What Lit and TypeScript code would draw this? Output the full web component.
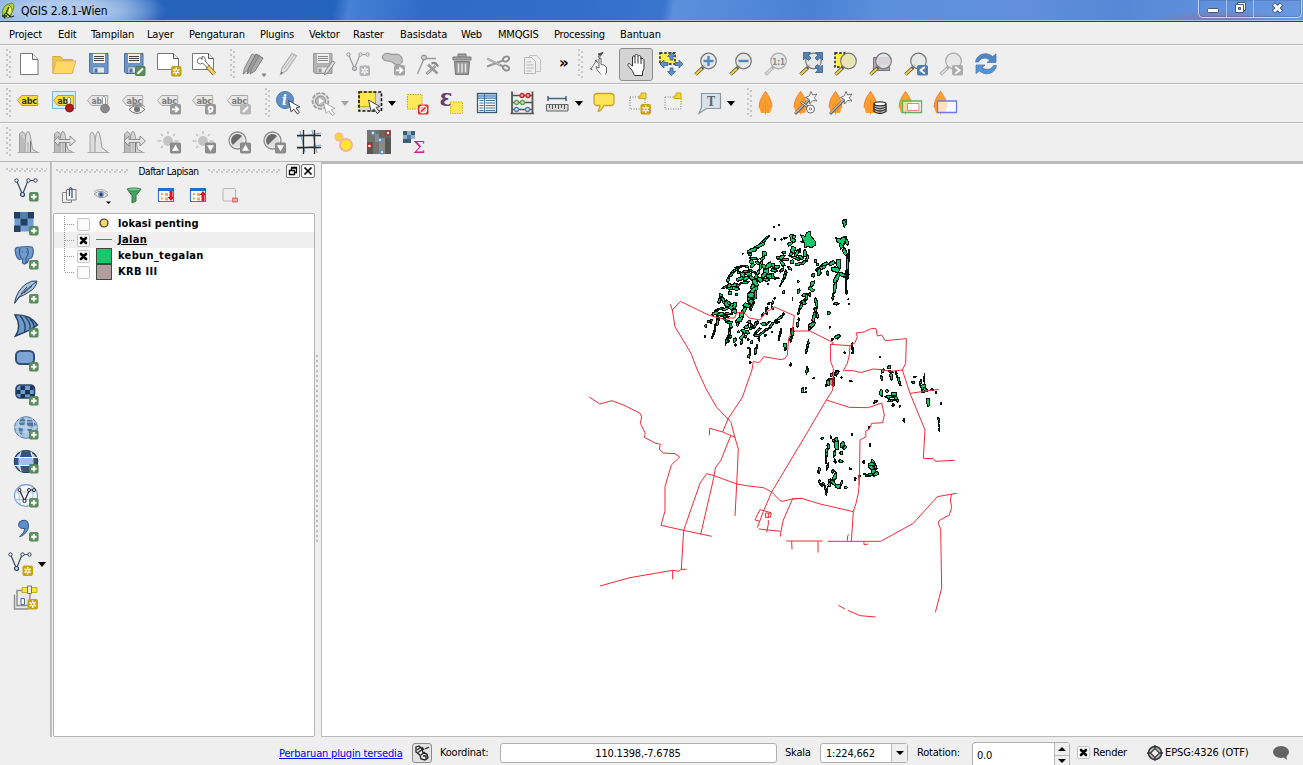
import { LitElement, html, svg, css } from "lit";
import { customElement } from "lit/decorators.js";

/* ---------- badges and shared glyph parts (24 x 24 grid) ---------- */
const plus = svg`<rect x="15.5" y="14.5" width="8.6" height="8.6" rx="1.2" fill="#5c8f5c" stroke="#4b7f4f" stroke-width=".8"/><path d="M19.8 16v5.6M17 18.8h5.6" stroke="#fff" stroke-width="1.9"/>`;
const star = (x: number, y: number, c = "#c9a20c") => svg`<g transform="translate(${x} ${y})"><rect x=".5" y=".5" width="9.5" height="9.5" rx="1.2" fill=${c} stroke=${c}/><path d="M5.200 1.500v7.500M2 3.400l6.400 3.700M8.400 3.400L2 7.100" stroke="#fff" stroke-width="1.500"/><circle cx="5.200" cy="5.200" r="1" fill=${c}/></g>`;
const badge = (c: string, d: string) => svg`<rect x="13.5" y="13.5" width="10" height="9.5" rx="1" fill=${c} stroke=${c}/><path d=${d} stroke="#fff" stroke-width="1.8" fill="none"/>`;
const up = svg`<rect x="13.5" y="13" width="10" height="10" rx="1" fill="#8f8f8f" stroke="#858585"/><path d="M18.500 14.800l3.500 6h-7z" fill="#fff"/>`;
const down = svg`<rect x="13.5" y="13" width="10" height="10" rx="1" fill="#8f8f8f" stroke="#858585"/><path d="M18.500 21.300l3.500-6h-7z" fill="#fff"/>`;
const page = svg`<path d="M.5 1.5h16l5 5v11H.5z" fill="#fff" stroke="#777"/><path d="M16.5 1.5v5h5" fill="#eee" stroke="#555"/>`;
const tag = (f: string, s: string, t: string, word = "abc") => svg`<path d="M.5 9.500l4.200-5h16v10h-16z" fill=${f} stroke=${s}/><text x="4.400" y="12.800" font-family="DejaVu Sans" font-weight="bold" font-size="9" textLength=${word.length * 5.2} lengthAdjust="spacingAndGlyphs" fill=${t}>${word}</text>`;
const greyTag = tag("#e6e6e6", "#a8a8a8", "#7c7c7c");
const lens = (o = 1) => svg`<g opacity=${o}><path d="M9 15.5l-7.5 7" stroke="#555" stroke-width="3.6"/><path d="M8 16.500l-6.500 6" stroke="#f5cd3a" stroke-width="2"/><path d="M8.8 14.8l2-2" stroke="#222" stroke-width="3"/><circle cx="14.5" cy="9" r="7.8" fill="#e4e7e6" fill-opacity=".88" stroke="#777" stroke-width="1.2"/></g>`;
const greyLens = svg`<path d="M9 15.5l-7.5 7" stroke="#aaa" stroke-width="3.4"/><path d="M8 16.5l-6 5.6" stroke="#ddd" stroke-width="1.8"/><path d="M8.8 14.8l2-2" stroke="#777" stroke-width="3"/><circle cx="14.5" cy="9" r="7.8" fill="#e8e8e8" stroke="#aaa" stroke-width="1.2"/>`;
const floppy = (a: string, b: string, c: string) => svg`<path d="M2.5 1.500h18.500v20h-17l-1.500-1.500z" fill=${a} stroke=${b}/><path d="M5.5 1.500h13v10h-13z" fill="#f0f0f0" stroke=${b} stroke-width=".6"/><path d="M7 4.500h10M7 6.500h10M7 8.500h10" stroke=${c} stroke-width="1"/><path d="M6 15h11.500v6H6z" fill="#e6e6e6" stroke=${b} stroke-width=".6"/><path d="M7.500 16.500h3v4h-3z" fill=${b}/>`;
const cursor = (x: number, y: number, s = "#444") => svg`<path transform="translate(${x} ${y})" d="M0 0l2.7 11.5 2.6-2.8 3.6 4.8 2.1-1.6-3.4-4.5 3.8-.9z" fill="#fff" stroke=${s} stroke-width="1"/>`;
const flame = svg`<path d="M7.5.5C5 4 1 9.500 1.200 16.500L3 22h9l1.800-5.500C14 9.500 10 4 7.500.5z" fill="#fba02f"/><path d="M7.500.5C5 4 1 9.500 1.200 16.500M7.500.5C10 4 14 9.500 13.800 16.500" fill="none" stroke="#f57b28"/><path d="M7.500 9v14.500M5 12.500v8M10 12.500v8" stroke="#ff8420" stroke-width=".8"/>`;
const wand = svg`<path d="M2 23L16 9" stroke="#666" stroke-width="2.800"/><path d="M2 22.500L15.500 9" stroke="#eee" stroke-width="1"/><path d="M18 .5l1.500 3.500 4.300-1-2.500 3.800 2.700 3.200-4.300-.6-3 3.600-.3-4.600-4-1.900 4-1.600z" fill="#fff" stroke="#666" stroke-width=".9"/>`;
const vline = (c: string) => svg`<path d="M2.500 2.500l6 14L14 2.500h7" fill="none" stroke=${c} stroke-width="1.200"/><circle cx="2.500" cy="2.500" r="1.700" fill="#e5edf5" stroke=${c}/><circle cx="8.500" cy="16.500" r="2" fill="#c5d8ee" stroke=${c} stroke-width="1.200"/><circle cx="14.500" cy="2.500" r="1.700" fill="#e5edf5" stroke=${c}/><circle cx="21.500" cy="2.500" r="1.700" fill="#e5edf5" stroke=${c}/>`;
const hist = (shape: number) => svg`<path d="M2.500 22.500V4L5 1.500l3 2 2 12 3 7z" fill="#cecece" stroke="#9c9c9c"/><path d="M8 22.500c0-8 0-21 3-21s3 15 5 18l5 3z" fill=${shape ? "#d4d4d4" : "#dedede"} stroke="#999"/><path d="M4 22V5M6 22V8M11 22V12" stroke="#a8a8a8"/><path d="M13.500 22.500V11" stroke="#777"/><path d="M.500 22.500h22" stroke="#aaa"/>`;
const harrow = svg`<path d="M2 11l5-5v3.500h11V6l5.500 5-5.500 5v-3.500H7V16z" fill="#e4e4e4" stroke="#8c8c8c"/>`;
const sun = svg`<circle cx="11" cy="11" r="5" fill="#c4c4c4"/><path d="M11 1v3M4 4l2 2M18 4l-2 2M0.500 11h4M4 18l2-2M17.500 11h4" stroke="#c0c0c0" stroke-width="1.500"/>`;
const contrast = svg`<circle cx="10.500" cy="10.500" r="8.500" fill="#eee" stroke="#8a8a8a" stroke-width="1.300"/><circle cx="10.500" cy="10.500" r="6.500" fill="#ddd"/><path d="M5.900 15.100A6.500 6.500 0 0 1 15.100 5.900z" fill="#6a6a6a"/>`;
const dark = "#33475f";
const checker = svg`<path d="M.500.500h19v19h-19z" fill="#6f9dd0"/><path d="M0 0h6.500v6.500H0zM13.500 0H20v6.500h-6.500zM6.500 6.500h7v7h-7zM0 13.500h6.500V20H0z" fill="#24405f"/><path d="M6.500 0h7v6.500h-7z" fill="#5580b5"/>`;

const I: Record<string, unknown> = {
  fresh: svg`<path d="M3.500 1.500h12l5.500 6v15h-17.500z" fill="#fff" stroke="#777"/><path d="M15.500 1.500v6h5.500" fill="#eee" stroke="#666"/>`,
  open: svg`<path d="M.800 21V4.500h8l2 3h10V21z" fill="#edc64e" stroke="#d8a93a"/><path d="M1 21.500L4 9h20l-4 12.500z" fill="#ffd964" stroke="#dcae40" stroke-width=".8"/>`,
  save: floppy("#6b96c8", "#4a6f9f", "#444"),
  saveas: svg`${floppy("#6b96c8", "#4a6f9f", "#444")}<rect x="13.500" y="14.500" width="9.500" height="9" rx="1" fill="#5c8f5c" stroke="#4b7f4f"/><path d="M15.500 21.800l5.500-5.300" stroke="#fff" stroke-width="2"/>`,
  print: svg`${page}${star(14, 14)}`,
  composer: svg`${page}<path d="M10 6.500a3 3 0 1 0 .5 4.500l5 5 2-2-4.500-5a3 3 0 0 0-3-4.500v3z" fill="#fff" stroke="#555" stroke-width=".9"/><path d="M15.500 14.500l7 7.500" stroke="#7a6020" stroke-width="4.400"/><path d="M16 15l6.500 7" stroke="#f1d068" stroke-width="3"/>`,
  pencils: svg`<path d="M2 22l1.500-6L11 2l4 2-8 14z" fill="#b5b5b5" stroke="#888"/><path d="M6 22l1.500-6L15 2l4 2-8 14z" fill="#9c9c9c" stroke="#777"/><path d="M9 22l1.500-5L18 4l4 2-8 13z" fill="#a9a9a9" stroke="#808080"/><path d="M2 22l2-1.500zM21 22h4l-2 2.500z" fill="#888" stroke="#888"/>`,
  pencil: svg`<path d="M4.500 22.500L6 16 16 1.500l4.500 2.300L10.500 18.500z" fill="#e2e2e2" stroke="#b0b0b0" stroke-width="1.200"/><path d="M8 17L18 3" stroke="#bbb"/><path d="M4.500 22.500l.7-3 2 1.500z" fill="#777"/>`,
  savee: svg`${floppy("#b4b4b4", "#969696", "#888")}<path d="M13.500 23l1-4.500L21.500 9l2.500 1.500-7 10z" fill="#ddd" stroke="#888"/>`,
  addf: svg`${vline("#999")}${star(13.500, 13.500, "#b4b4b4")}`,
  movef: svg`<path d="M1.500 6c-1-4 4-5.500 8-4 4 1 6-1 9 1s4 7 1 9-6 0-9-2-8 0-9-4z" fill="#c2c2c2" stroke="#888"/>${badge("#a6a6a6", "M15 18.300h5.500M18.300 15.500l3 2.800-3 2.800")}`,
  node: svg`<path d="M1.500 22L8 6.500H20" fill="none" stroke="#999" stroke-width="1.300"/><circle cx="8" cy="5.500" r="2.500" fill="#c8c8c8" stroke="#888"/><path d="M10.500 22l9-8" stroke="#8a8a8a" stroke-width="2.800"/><path d="M11 21.600l8.500-7.600" stroke="#ddd"/><path d="M12 12.500l9.500 9" stroke="#999" stroke-width="2.600"/><path d="M15.500 11.500q4-2 6.500 3" fill="none" stroke="#8a8a8a" stroke-width="2.200"/>`,
  trash: svg`<path d="M2 5h18v3H2zM7 5V2h8v3" fill="#a4a4a4" stroke="#777"/><path d="M3.500 9.500h15l-1 13h-13z" fill="#9a9a9a" stroke="#777"/><path d="M7.500 11.500v9M11 11.500v9M14.500 11.500v9" stroke="#e8e8e8" stroke-width="1.500"/>`,
  cut: svg`<path d="M1 6.500l16 8M1 14.500L17 8.500" stroke="#999" stroke-width="2.200"/><path d="M1 6.500l13 6.200" stroke="#ddd" stroke-width=".7"/><ellipse cx="20" cy="7" rx="3.200" ry="2.300" transform="rotate(-25 20 7)" fill="none" stroke="#8c8c8c" stroke-width="1.800"/><ellipse cx="20" cy="16" rx="3.200" ry="2.300" transform="rotate(25 20 16)" fill="none" stroke="#8c8c8c" stroke-width="1.800"/>`,
  copy: svg`<path d="M8.500 3.500h7l4 4v12h-11z" fill="#eee" stroke="#c4c4c4"/><path d="M3.500 5.500h7l4 4v12h-11z" fill="#eee" stroke="#b6b6b6"/><path d="M5.500 10h5M5.500 13h7M5.500 16h7M5.500 19h5" stroke="#b8b8b8"/>`,
  touch: svg`<path d="M8 7.500L2 17" stroke="#777"/><path d="M1 16.500l2.500 1.500M9 2l5-1.500-3 4z" stroke="#555" fill="#555"/><path d="M12 22.500L8 17.500l-1-3 3 1.500V6.500q1-1.300 2 0v6l3 .5 2.500 2v5l-1 2.500" fill="#fff" stroke="#666"/><path d="M6 8l3 2.500M9 4l2 3" stroke="#555" stroke-width="1"/>`,
  hand: svg`<path d="M8.500 22.500L6.500 18 2 12.500c-.8-2 1-2.500 2.300-1.300L6.500 13V4c.5-1.800 2.200-1.500 2.500 0v-1.500c.5-1.500 2.500-1.500 3 0V3.500c.5-1.500 2.500-1.200 3 .5V6c1.500-1.300 3-.3 3 1.500v8L16.500 19v3.500z" fill="#fff" stroke="#333" transform="translate(2)"/><path d="M11 4v6.500M14 3.500v7M17 4.500v6.500" stroke="#333"/>`,
  pansel: svg`<path d="M1 1h15v11H1z" fill="#ffec4d" stroke="#111" stroke-width="1.400" stroke-dasharray="2.500 1.700"/><g fill="#5f90c5" stroke="#38638f" stroke-width=".8"><path d="M12.500.5l4 4h-2.500V8h-3V4.500H8.500z"/><path d="M12.500 23.500l4-4h-2.500V16h-3v3.500H8.500z"/><path d="M1 12l4-4v2.500h4v3H5V16z"/><path d="M24 12l-4-4v2.500h-4v3h4V16z"/></g>`,
  zin: svg`${lens()}<path d="M14.500 4v10M9.500 9h10" stroke="#5585bb" stroke-width="2.400"/>`,
  zout: svg`${lens()}<path d="M9.500 9h10" stroke="#5585bb" stroke-width="2.400"/>`,
  z11: svg`${greyLens}<text x="8.300" y="12.500" font-size="9.500" font-weight="bold" textLength="12.500" lengthAdjust="spacingAndGlyphs" fill="#888" font-family="DejaVu Sans">1:1</text>`,
  zfull: svg`${lens()}<g fill="#5583b5" stroke="#355d88" stroke-width=".8"><path d="M4.500.5h7L9 3l3 3-2.500 2.500-3-3-2 2.500z"/><path d="M23.500.5h-7L19 3l-3 3 2.500 2.500 2.500-3 2.500 2.500z"/><path d="M23.500 20.500h-7L19 18l-3-3 2.500-2.500 2.500 3 2.500-2.500z"/></g>`,
  zsel: svg`<path d="M1 1h10v14H1z" fill="#ffec4d" stroke="#111" stroke-width="1.400" stroke-dasharray="2.500 1.700"/>${lens()}<circle cx="14.500" cy="9" r="6.800" fill="#e9e4b4"/>`,
  zlay: svg`<path d="M4.500 5.500h16v13h-16z" fill="#b8a8bb" stroke="#7e7080"/>${lens()}<path d="M9 5.500h11v7H9z" fill="#cdc4d0" opacity=".5"/>`,
  zlast: svg`${lens()}${badge("#4f7fae", "M20.800 15l-4.300 3.300 4.300 3.300")}`,
  znext: svg`${greyLens}${badge("#acacac", "M16.300 15l4.300 3.300-4.300 3.300")}`,
  refresh: svg`<path d="M1.500 10c1-8 11-11 17-5.500L22 2v8.500h-9L16 8C11 4.500 6 6.500 4.500 10z" fill="#4f87c4" stroke="#4276b0" stroke-width=".7"/><path d="M22.500 13.500c-1 8-11 11-17 5.500L2 21.500V13h9l-3 2.700c5 3.300 10 1.300 11.500-2.200z" fill="#5a92cf" stroke="#4276b0" stroke-width=".7"/>`,

  lab: tag("#f8db3a", "#c79b1e", "#333"),
  labpin: svg`<rect x=".5" y=".5" width="23" height="17" fill="#dcebf9" stroke="#88b4e4"/><g transform="translate(1)">${tag("#f8db3a", "#c79b1e", "#333", "ab")}</g><path d="M15.500 13V7.500q1.500-3 3 0V13" fill="#fff" stroke="#888"/><circle cx="17.500" cy="17" r="4" fill="#b01c1c" stroke="#8c1212"/>`,
  labg: svg`${tag("#e6e6e6", "#a8a8a8", "#7c7c7c", "ab")}<path d="M15.500 13V6.500q1.500-3 3 0V13" fill="#fff" stroke="#999"/><circle cx="18" cy="17.500" r="4.300" fill="#8a8a8a" stroke="#777"/>`,
  labeye: svg`${greyTag}<path d="M7 18.500q8-8 16 0q-8 8-16 0z" fill="#f2f2f2" stroke="#777"/><circle cx="15" cy="18.300" r="3" fill="#777"/><path d="M7 15.500q8-5 16 0" fill="none" stroke="#888"/>`,
  labmov: svg`${greyTag}${badge("#989898", "M15 18.300h5.500M18.300 15.500l3 2.800-3 2.800")}`,
  labrot: svg`${greyTag}${badge("#989898", "M16.500 21.500q4.500-.5 4-4a2 2 0 1 0-1 2")}`,
  labed: svg`${greyTag}${badge("#b8b8b8", "M16 21l5-5")}`,
  info: svg`<circle cx="9" cy="9" r="8.500" fill="#5f8fc6" stroke="#4c7ab0"/><text x="6" y="14" font-family="DejaVu Serif" font-style="italic" font-weight="bold" font-size="14" fill="#fff">i</text>${cursor(12.500, 9.500)}`,
  gear: svg`<circle cx="9.500" cy="10" r="8" fill="#ddd" stroke="#999" stroke-width="1.600" stroke-dasharray="4 1.500"/><circle cx="9.500" cy="10" r="5" fill="#bbb" stroke="#888"/><path d="M8 7l5 3-5 3z" fill="#fff"/>${cursor(12.500, 11, "#aaa")}`,
  select: svg`<path d="M1 1h22.500v19H1z" fill="#d5d7da"/><path d="M1 1h16.500v14.500H1z" fill="#ffe74a" stroke="#c8a923"/><path d="M1 1h22.500v19H1z" fill="none" stroke="#111" stroke-width="1.600" stroke-dasharray="3 1.800"/>${cursor(10.500, 9)}`,
  desel: svg`<path d="M2.500 3.500h14.500v14.500H2.500z" fill="#ffe95a" stroke="#c9a613" stroke-dasharray="1.500 1"/><rect x="13" y="13.500" width="10.500" height="10" rx="1.500" fill="#df2d2d"/><circle cx="18.200" cy="18.500" r="3.400" fill="#f6b8b8" stroke="#fff" stroke-width="1.200"/><path d="M16 20.800l4.500-4.500" stroke="#df2d2d" stroke-width="1.300"/>`,
  eps: svg`<text x="-.5" y="14.500" font-size="24" font-weight="bold" font-family="DejaVu Serif" fill="#6a3a6c" textLength="13" lengthAdjust="spacingAndGlyphs">ε</text><path d="M10.500 11h12v11.500h-12z" fill="#ffe95a" stroke="#d0b020" stroke-dasharray="1.500 1"/>`,
  table: svg`<rect x="2.500" y="2.500" width="19" height="19" fill="#f4f6f7" stroke="#355a75" stroke-width="1.300"/><path d="M3 3.500h18v3H3z" fill="#7ba6cf"/><path d="M4.500 9.500h4M4.500 12h4M4.500 14.500h4M4.500 17h4M4.500 19.500h4M10.500 9.500h9.500M10.500 12h9.500M10.500 14.500h9.500M10.500 17h9.500M10.500 19.500h9.500" stroke="#53748c"/><path d="M3 7.300h18M9.500 3v18" stroke="#355a75" stroke-width=".8"/>`,
  abacus: svg`<path d="M2 .5V22M22.500 .5V22" stroke="#555" stroke-width="1.800"/><path d="M.500 22.500h23.500M2 4.500h20M2 11.500h20M2 18.500h20" stroke="#555" stroke-width="1.300"/><g stroke-width="1.300"><g fill="#f3a8a8" stroke="#c22"><circle cx="12" cy="4.500" r="2"/><circle cx="18" cy="4.500" r="2"/></g><g fill="#cfe9cf" stroke="#5aa35a"><circle cx="6.500" cy="11.500" r="2"/><circle cx="12.500" cy="11.500" r="2"/></g><g fill="#dbe8f7" stroke="#4f7fb0"><circle cx="6.500" cy="18.500" r="2"/><circle cx="17.500" cy="18.500" r="2"/></g></g>`,
  ruler: svg`<path d="M3 7.500h18M3 5v5M21 5v5" stroke="#416585" stroke-width="1.500"/><path d="M1.500 13.500h21.500v6.500H1.500z" fill="#d9d9d9" stroke="#666"/><path d="M4.500 14v3M7.500 14v4M10.500 14v3M13.500 14v4M16.500 14v3M19.500 14v4" stroke="#555"/>`,
  tip: svg`<path d="M5 2.500h14q3 0 3 3v5.500q0 3.500-3 3.500h-7l-3 4.500q-2 1.800-3 1 1.500-1.500 2-5.500H5q-3 0-3-3.500V5.500q0-3 3-3z" fill="#fde55a" stroke="#c9a227" stroke-width="1.300"/>`,
  annot: svg`<path d="M3 6h15v12H3z" fill="none" stroke="#777" stroke-dasharray="1 1.500"/><path d="M14 2h5v5.500h-7V5h2z" fill="#f5d930" stroke="#caa51a"/>${star(13.500, 13)}`,
  form: svg`<path d="M3 6h16v12H3z" fill="none" stroke="#777" stroke-dasharray="1 1.500"/><path d="M14 2h5v5.500h-7V5h2z" fill="#f5d930" stroke="#caa51a"/>`,
  textann: svg`<path d="M4.500 2.500h19v15h-14L2 22.500l2.500-6z" fill="#d7e2ec" stroke="#8d979f" stroke-width="1.200"/><text x="10" y="14.500" font-family="DejaVu Serif" font-size="12" font-weight="bold" textLength="8" lengthAdjust="spacingAndGlyphs" fill="#666">T</text>`,
  flame,
  flamecut: svg`${flame}${wand}<path d="M8 11l10 7" stroke="#666" stroke-width="2.600"/><path d="M8 11l10 7" stroke="#eee" stroke-width="1"/><circle cx="17.500" cy="18" r="4" fill="#fff" stroke="#666"/><circle cx="17.500" cy="18" r="1.200" fill="none" stroke="#777"/>`,
  flamewand: svg`${flame}${wand}`,
  flamedb: svg`${flame}<g fill="#fff" stroke="#333" stroke-width="1.300"><path d="M11 17.500v3q6 4 12 0v-3" fill="#bbb"/><path d="M11 15v3q6 4 12 0v-3" fill="#ddd"/><path d="M11 12.800v3q6 4 12 0v-3" fill="#bbb"/><ellipse cx="17" cy="12.800" rx="6" ry="2"/></g>`,
  flamegreen: svg`${flame}<path d="M4.500 10h19v11.500h-19z" fill="#fff" fill-opacity=".6" stroke="#58b558" stroke-width="1.300"/><path d="M9.500 12.500h11.500v7H9.500z" fill="#fff" fill-opacity=".8" stroke="#ef8080"/>`,
  flameblue: svg`${flame}<path d="M4.500 10h19v11.500h-19z" fill="#fff" fill-opacity=".7" stroke="#6f79ee" stroke-width="1.300"/>`,

  h1: hist(0),
  h2: svg`${hist(1)}${harrow}`,
  h3: svg`<path d="M3 22.500V5q2-6 4 0l3 13 3 4.500z" fill="#dcdcdc" stroke="#a6a6a6"/><path d="M8 22.500q-.5-20 3-21 2 1 4 16l6 5z" fill="#e4e4e4" stroke="#999"/><path d="M.500 22.500h22" stroke="#aaa"/>`,
  h4: svg`${hist(1)}${harrow}`,
  sunup: svg`${sun}${up}`,
  sundown: svg`${sun}${down}`,
  conup: svg`${contrast}${up}`,
  condown: svg`${contrast}${down}`,
  georef: svg`<path d="M3 1l5 21M15 0l5 23M0 7l24-4M0 19l24-4" stroke="#7aa6cb" stroke-width="1.100"/><path d="M6.500 0v24M17.500 0v24M0 5.500h24M0 17.500h24" stroke="#2b2b2b" stroke-width="1.300"/>`,
  heat: svg`<circle cx="7" cy="7" r="4.500" fill="#f9b4a0"/><circle cx="7" cy="7" r="3" fill="#fcd829"/><circle cx="14" cy="15" r="7" fill="#f7b09c"/><circle cx="14" cy="15" r="5" fill="#ffe92a"/>`,
  interp: svg`<path d="M0 0h24v24H0z" fill="#8b8b88"/><path d="M0 0h12v4H8v8h4v12H0z" fill="#73736f"/><path d="M0 12h6v12H0zM18 8h6v16h-6z" fill="#575754"/><path d="M12 0h12v8H12z" fill="#666662"/><g stroke-width="1.200"><g fill="#cfe0f0" stroke="#5b8dc0"><circle cx="6" cy="3" r="1.900"/><circle cx="13" cy="10" r="1.900"/><circle cx="15" cy="22" r="1.900"/></g><g fill="#fff" stroke="#c32222"><circle cx="21" cy="3" r="1.900"/><circle cx="2.500" cy="16" r="1.900"/></g></g>`,
  zonal: svg`<path d="M1 1h12v8H9v4H1z" fill="#3f5c75"/><path d="M5 1h4v4H5zM1 5h4v4H1zM9 5h4v4H9z" fill="#8fb0cc"/><path d="M5 5h4v4H5z" fill="#56799a"/><text x="11" y="22.500" font-family="DejaVu Serif" font-size="17" fill="#cc2299" textLength="12" lengthAdjust="spacingAndGlyphs">Σ</text>`,

  vector: svg`${vline(dark)}${plus}`,
  raster: svg`${checker}${plus}`,
  postgis: svg`<path d="M1.500 6Q0 1 6 1q8-1 12 0 3 4-.5 11l-2.500.5-1.500 4-3 1.500-2-1V12.500l-3 1Q2 12 1.500 6z" fill="#6f9bcd" stroke="#3e6490" stroke-width="1.200"/><path d="M6 2q-2 6 1 10M13 2q3 5-1 10v5M8 6h1M12 6h1" fill="none" stroke="#2d4c75"/>${plus}`,
  spatialite: svg`<path d="M.500 23Q3 10 12 4q6-4 11-3-1 7-8 11-6 4-10 5z" fill="#a9c6e3" stroke="#33475f"/><path d="M.500 23.500Q8 12 22 2M7 14l6-7M10 13l8-7" fill="none" stroke="#33475f"/>${plus}`,
  mssql: svg`<path d="M1 1q15-1 22.500 10-6 5-22 11Q8 12 1 1z" fill="#6d9acb" stroke="#24405f" stroke-width="1.400"/><path d="M6 1.500q7 8 4.500 17M11 2.500q6 6 5 13M16 5q4 4 4 8" fill="none" stroke="#24405f" stroke-width="1.300"/>${plus}`,
  oracle: svg`<rect x="2" y="3" width="18" height="13" rx="4.500" fill="#7da5d6" stroke="#33507a" stroke-width="2"/>${plus}`,
  oraster: svg`<rect x="2" y="3" width="18.500" height="13" rx="4" fill="#6f9dd0" stroke="#2a4568" stroke-width="1.600"/><path d="M6.500 4H11v4H6.500zM16 4h3.500v4H16zM2.500 8h4v4h-4zM11 8h5v4.500h-5zM6.500 12H11v4H6.500zM16 12h4v4h-4z" fill="#1f3450"/>${plus}`,
  wms: svg`<ellipse cx="12" cy="11.500" rx="11.500" ry="10.800" fill="#a6c3e4" stroke="#5579a5"/><path d="M4 5l5-3 3 3-2 4H6zM13 4l6 0 3 5-4 3-5-3zM4 11l5 2-1 6-4-3zM13 13l5 0-2 5z" fill="#52779f"/><path d="M0 11h24M12 1v21M6 2q-4 9 0 19M18 2q4 9 0 19M2 6h20M2 16h20" fill="none" stroke="#cbdcf0" stroke-width=".8"/>${plus}`,
  wcs: svg`<ellipse cx="12" cy="11.500" rx="11.500" ry="10.800" fill="#9fc1ea" stroke="#24405f" stroke-width="1.400"/><path d="M7 2h9l2 5H5zM.500 7.500H6V15H1zM18 7.500h5V15h-5zM6 15h11v6l-5 1-5-2z" fill="#33537c"/><path d="M.500 7.500h23M.500 15.500h23M7 1.500q-4 10 0 20M17 1.500q4 10 0 20" fill="none" stroke="#fff"/>${plus}`,
  wfs: svg`<ellipse cx="12" cy="11.500" rx="11.500" ry="10.800" fill="#f4f8fd" stroke="#6f9bd0" stroke-width="1.200"/><path d="M1 8h22M1 15.500h22M7 1.500q-4 10 0 20M17 1.500q4 10 0 20" fill="none" stroke="#a7c3e4"/><path d="M5.500 6l5 11 5-11H20" fill="none" stroke="#222" stroke-width="1.200"/><g fill="#fff" stroke="#222"><circle cx="5.500" cy="6" r="1.500"/><circle cx="10.500" cy="17" r="1.600"/><circle cx="15" cy="6" r="1.500"/><circle cx="20" cy="6" r="1.500"/></g>${plus}`,
  csv: svg`<path d="M8 2.500q6.500-1.500 6.500 5.500 0 7-9 11 5-4 5.500-8.500-6.500.5-6.500-4 .5-3.500 3.500-4z" fill="#5d8fcb" stroke="#32557f"/>${plus}`,
  newvec: svg`${vline(dark)}${star(14.500, 13.500)}`,
  gps: svg`<path d="M.500 8.500v14.500h14M3 4.500h13v15H3z" fill="#e8e8e8" stroke="#8f8f8f" stroke-width="1.400"/><path d="M8 1.500h15v5H8z" fill="#f5e63a" stroke="#c0ac2c"/><path d="M13.500 0h4v7.500h-4z" fill="#e9e9e9" stroke="#777"/><path d="M7 12.500h3.500v6H7z" fill="#fff" stroke="#4c6d8c"/>${star(13.500, 13)}`,

  dup: svg`<path d="M4.500 9.500h9v10h-9z" fill="#eee" stroke="#888"/><path d="M8.500 6.500h9.500v10.500H8.500z" fill="#f4f4f4" stroke="#777"/><path d="M11.500 13V6q1.200-3 2.500 0v9" fill="none" stroke="#33537c" stroke-width="1.200"/>`,
  eye: svg`<path d="M4 11q7-6 14 1-7 6-14-1z" fill="#e4e8ee" stroke="#999"/><circle cx="11" cy="11.500" r="2.800" fill="#6b8fc0"/><circle cx="11" cy="11.500" r="1.200" fill="#223"/><path d="M4 8.500q7-4.500 14 1" fill="none" stroke="#aaa"/><path d="M16 18.500h5L18.500 21z" fill="#000"/>`,
  filter: svg`<path d="M5 6h14l-5 6.500V18l-4 2v-7.500z" fill="#48a063" stroke="#2e7d46"/><ellipse cx="12" cy="6.500" rx="6.500" ry="1.600" fill="#79c490" stroke="#2e7d46" stroke-width=".8"/>`,
  expand: svg`<path d="M4.500 5.500h15v13h-15z" fill="#fff" stroke="#3978d6" stroke-width="1.200"/><path d="M4 5h16v3H4z" fill="#2a67cf"/><path d="M7 10h2v2H7zM7 14.500h2v2H7zM11 10h3v3h-3zM11 14.500h3v3h-3z" fill="#f3a94c"/><path d="M15.500 8v6H13.500l3.500 4 3-4H18.500V8z" fill="#e2101b"/>`,
  collapse: svg`<path d="M4.500 5.500h15v13h-15z" fill="#fff" stroke="#3978d6" stroke-width="1.200"/><path d="M4 5h16v3H4z" fill="#2a67cf"/><path d="M7 10h2v2H7zM7 14.500h2v2H7zM11 10h3v3h-3zM11 14.500h3v3h-3z" fill="#f3a94c"/><path d="M15.500 18v-6H13.500l3.500-4 3 4H18.500v6z" fill="#e2101b"/>`,
  remove: svg`<rect x="5" y="5.500" width="12.500" height="12.500" rx="1" fill="#eee" stroke="#b5b5b5"/><rect x="14" y="14.500" width="6" height="5" rx="1" fill="#e86d6d"/><path d="M15 17h4" stroke="#fff"/>`,
};
const icon = (n: string) => html`<svg class="ic" width="24" height="24" viewBox="0 0 24 24">${I[n]}</svg>`;

/* ---------- map data ---------- */
type Frame = { dx: number; dy: number; lines: string[] };
const roads: Frame[] = [
  { dx: 580, dy: 290, lines: [
    "271,43 277,60 285,110 333,190 352,240 380,300 410,352 444,387 453,397 464,440 475,477 470,585 465,678",
    "277,60 301,34 388,76 437,89 450,84 464,84 470,68 492,68 508,84 540,90 557,67 583,51 643,77 637,122 626,145 622,195 615,205 604,209 551,200 541,215 533,218 520,214 516,240 487,322 444,387 428,426",
    "388,436 389,415 428,426 466,442", "452,438 422,512 406,534 402,560 362,733",
    "28,321 59,342 96,332 135,347 180,370 185,380 181,400 196,430 193,442 225,459 241,463 238,478 250,489 285,491 299,501 274,525 255,590 255,663 243,706 311,721 395,739",
    "311,721 360,580 380,551 402,557 470,582 505,588 550,593 575,606 600,632 608,634 640,626 666,625",
    "311,721 304,838", "60,888 150,863 278,841 297,844 302,838 320,838", "278,841 278,868",
    "660,464 575,606 550,665 532,713", "573,668 540,659 527,685 525,690 540,694", "557,669 574,670 571,682 556,682 557,669", "565,670 565,682", "565,690 565,702 560,727", "536,717 603,724 601,740", "638,626 610,690 603,724" ] },
  { dx: 740, dy: 480, lines: [
    "158,57 185,55 240,72 340,95 334,184", "340,95 348,70 355,40 358,10 355,-14", "139,183 248,183", "155,183 156,208", "234,184 234,218",
    "263,184 422,184 520,130 592,50 650,40", "635,42 631,60 635,82 628,105 597,122 595,130 602,148 605,325 586,397",
    "322,182 323,168 327,163", "372,185 372,194 385,192", "295,376 315,387", "323,391 360,407 407,411" ] },
  { dx: 790, dy: 330, lines: [
    "7,3 60,3 130,38 128,42 121,43 122,95 130,115 128,180 109,210 28,348",
    "122,43 180,47 178,75 172,100 160,122 190,122 205,126 215,127 250,117 275,119 300,124 337,120 347,100 349,26 286,32 275,15 262,18 258,-4 245,-5 222,6 198,9 202,20 195,38 180,47",
    "337,120 360,190 405,300 400,385 430,386 436,394 494,391", "360,190 446,178",
    "109,210 178,232 235,233 275,219 283,255 278,278 245,280 238,298 227,303 228,320 210,330 208,455 205,464" ] },
];

/* plots: x, y, width, height, rotation in a third-pixel grid */
type Plot = [number, number, number, number, number];
const north: Plot[] = [
  [448,25,11,22,15],[452,15,6,8,0],[238,37,4,4,0],[252,30,3,4,0],[440,88,12,30,-5],[455,80,8,24,0],[450,110,14,20,0],[462,120,6,30,0],
  [432,145,18,24,-20],[412,145,16,16,0],[422,165,20,22,10],[442,180,22,14,0],[458,160,8,60,0],[453,205,6,60,0],[424,190,14,34,10],[420,215,7,50,5],[414,245,5,24,10],[424,266,14,8,-20],[463,266,4,4,0],[461,253,3,4,0],
  [390,148,20,12,-10],[378,160,26,14,-25],[372,172,12,22,30],[362,137,9,12,20],[368,148,8,8,0],[355,182,10,12,0],[352,205,9,22,5],[349,222,16,14,20],[335,245,9,22,25],[325,262,22,12,-30],[318,275,10,22,15],[312,290,5,20,5],[343,238,8,12,0],
  [364,265,8,34,0],[361,290,12,20,5],[356,306,12,26,10],[349,330,16,24,25],[344,340,7,14,0],[367,300,5,22,0],[308,328,10,14,20],[312,313,5,10,0],[403,296,9,11,-10],[404,338,4,5,0],[398,175,4,20,0],[455,230,4,16,0],
  [292,72,20,22,0],[298,65,12,12,0],[285,86,13,14,20],[269,70,12,5,-10],[259,73,5,4,0],[241,73,5,5,0],[295,105,20,18,10],[306,115,12,20,15],[288,118,10,14,0],[303,130,24,10,20],[318,128,14,12,0],[329,116,14,18,15],[336,130,10,16,10],[325,143,16,9,-20],[309,147,16,11,-10],[290,140,10,12,0],[315,105,6,12,0],
  [268,113,12,8,0],[262,126,20,10,-15],[248,130,12,9,0],[272,134,16,9,0],[262,146,18,12,30],[283,160,15,8,20],[272,174,10,14,0],[260,165,8,14,30],[245,155,14,16,10],[237,166,16,12,0],[232,182,16,14,20],[234,150,14,10,0],
  [216,68,22,6,-30],[205,80,26,9,-35],[190,95,40,13,-30],[173,106,28,14,-35],[165,117,10,12,0],[207,117,20,12,-20],[202,130,14,11,0],[175,130,22,8,10],[168,140,12,12,0],[188,143,13,10,0],[198,150,10,20,10],[173,152,17,11,0],[143,117,3,3,0],
  [137,155,28,5,-10],[122,165,28,7,-35],[108,180,28,6,-50],[99,196,18,7,-60],[88,217,16,6,-20],[130,172,10,8,0],[155,155,10,6,0],
  [208,155,18,12,20],[215,170,24,16,-10],[208,180,18,14,0],[222,152,16,22,0],[222,185,14,16,0],[212,195,22,10,-10],[195,195,22,13,-20],[183,185,15,10,0],[189,172,10,14,0],[170,168,20,8,30],[160,176,16,14,0],[150,170,20,7,-20],[143,180,20,14,10],[155,190,22,11,0],[136,192,20,14,0],[150,203,24,8,-10],[170,190,14,16,0],[180,205,22,20,0],[172,215,16,12,0],
  [176,225,22,22,0],[170,240,22,24,10],[168,258,18,22,20],[155,270,22,14,-20],[148,286,16,18,30],[140,300,20,15,-35],[133,315,14,24,25],[128,328,6,20,20],[161,250,10,12,0],[180,240,10,26,10],[170,275,8,20,20],
  [112,215,32,16,-10],[121,220,18,14,20],[102,211,12,12,0],[106,232,12,11,0],[130,211,10,10,0],[125,240,6,9,0],[77,242,12,9,20],[73,258,6,28,15],[85,257,18,12,40],[95,268,26,12,30],[108,275,22,14,0],[90,282,20,8,0],[70,283,24,6,-20],[100,262,6,24,-30],[120,270,14,18,40],[78,297,34,7,0],[100,297,30,6,10],[62,295,18,12,0],[118,290,12,16,0],[90,305,22,5,0],
  [68,320,10,22,10],[60,338,6,20,5],[55,358,5,24,15],[67,308,10,10,0],[40,320,9,7,-20],[33,332,9,8,0],[50,316,7,8,0],[30,365,4,5,0],[48,325,4,4,0],
  [102,322,18,12,10],[107,335,9,18,20],[104,350,8,18,10],[107,364,6,12,0],[95,375,6,26,10],[119,375,7,18,0],[121,390,5,6,0],[92,315,20,5,20],[101,378,5,10,0],
  [164,322,12,10,0],[155,336,12,16,20],[166,340,12,8,-20],[147,350,16,14,0],[157,352,14,10,0],[141,365,14,18,30],[139,382,8,14,0],[150,365,8,10,0],[130,350,5,6,0],[182,328,8,22,30],[188,322,12,5,-60],[170,333,6,12,0],
  [191,345,16,9,-30],[186,362,14,13,0],[192,372,5,14,0],[182,353,8,8,0],[203,352,8,22,45],[215,343,8,14,40],[205,328,12,12,-40],[218,325,14,6,-45],[230,330,8,20,45],[242,318,5,12,30],[250,322,12,5,-20],[256,308,7,26,40],[265,298,10,6,-40],[210,360,8,8,0],[231,350,5,6,0],
  [222,265,12,5,-50],[216,280,7,8,0],[232,264,5,12,20],[232,278,6,14,0],[214,290,6,14,0],[205,298,6,12,30],[239,251,4,8,0],[265,233,8,11,20],[292,252,4,6,0],[262,198,5,26,30],[268,186,6,18,10],[256,212,4,8,30],[310,200,6,7,0],[311,228,6,18,0],[325,240,12,8,-20],
  [258,347,4,14,10],[254,362,5,22,5],[292,360,7,36,10],[286,372,5,14,20],[270,392,8,20,5],[271,402,5,9,0],[288,350,6,16,0],[336,402,5,28,15],[333,410,4,8,0],[337,466,5,18,-5],[286,449,4,7,0],[183,405,8,24,20],[186,395,4,14,10],[166,410,5,18,-5],[159,400,10,5,20],[161,425,6,14,0],[165,442,6,9,0],[170,380,8,12,0],[160,373,5,8,0],[428,365,14,12,0],[411,373,7,6,0],[448,412,4,5,0],[472,402,4,24,-10],[424,474,12,14,20],
  [220,208,5,5,0],[245,190,14,5,0],[320,80,8,5,0],
];
const south: Plot[] = [
  [7,12,5,38,10],[51,52,6,36,15],[56,38,5,7,0],[50,120,5,20,0],[2,104,4,10,0],[70,145,8,3,-20],[38,180,9,13,30],[48,174,4,6,0],[47,187,4,5,0],[143,20,15,12,0],[126,29,6,6,0],[164,68,4,5,0],[187,52,5,22,0],[271,81,4,4,0],
  [141,128,9,13,20],[124,134,6,14,0],[122,147,16,5,-10],[115,158,12,13,30],[110,166,6,5,0],[131,153,5,22,0],[130,166,6,10,0],[154,142,4,5,0],[182,152,8,6,20],[187,68,4,6,0],
  [297,112,14,9,-10],[302,125,16,5,30],[278,122,7,16,0],[275,143,5,18,0],[304,138,10,20,10],[321,138,5,18,-20],[327,152,8,26,-25],[318,130,6,10,0],[274,190,8,28,5],[256,214,11,9,-20],[253,218,5,7,0],
  [292,183,10,10,0],[298,200,26,9,10],[312,192,13,16,10],[306,210,22,8,-10],[318,203,12,10,0],[324,212,8,9,0],[310,227,7,10,10],[329,230,5,5,0],[341,271,7,11,0],[373,140,10,5,0],[371,156,11,7,0],[403,145,4,22,0],[391,158,5,18,0],[399,170,12,24,-10],[405,179,12,16,0],[400,183,12,10,0],[415,216,12,20,0],[428,180,8,5,20],[438,188,4,8,0],[453,221,4,8,-20],[446,270,5,16,0],[447,285,5,12,0],[448,297,4,14,0],
  [97,325,8,7,0],[122,322,5,9,10],[130,332,8,8,0],[140,330,12,16,10],[140,345,20,20,0],[158,344,15,16,0],[165,353,8,14,0],[154,370,6,14,0],[115,350,7,16,10],[110,370,8,24,5],[108,390,7,18,0],[112,410,6,20,5],[133,370,5,24,0],[135,393,5,16,0],[152,393,14,8,-10],[130,424,8,12,0],[88,421,9,14,0],[186,315,4,5,0],[240,346,4,14,0],[237,291,5,6,0],[222,395,6,12,10],[180,416,5,5,0],
  [134,440,12,24,0],[123,452,16,18,10],[118,462,7,20,15],[130,458,18,10,20],[145,468,24,10,0],[155,459,8,13,10],[167,474,10,9,-20],[87,454,8,8,0],[94,465,5,14,-30],[106,475,6,18,-10],[110,484,5,22,10],[100,461,6,5,0],
  [247,395,10,11,10],[243,410,12,18,10],[256,409,10,16,0],[251,425,18,14,0],[240,435,28,8,-5],[258,432,14,14,0],[246,403,16,12,0],[231,435,18,5,10],[196,446,6,12,15],[209,438,5,7,0],[183,418,4,4,0],
];
const wobble = [1.2, .62, 1.3, .8, 1.05, .55, 1.35, .75, 1.1, .6, .95];
function outline([x, y, w, h, r]: Plot, i: number) {
  const n = Math.max(w, h) > 12 ? 11 : 6;
  const a = (r * Math.PI) / 180;
  const pts: string[] = [];
  for (let k = 0; k < n; k++) {
    const t = (k / n) * Math.PI * 2;
    const f = wobble[(k * 4 + i * 7) % 11];
    const px = (Math.cos(t) * w * f) / 2, py = (Math.sin(t) * h * f) / 2;
    pts.push(`${(x + px * Math.cos(a) - py * Math.sin(a)).toFixed(1)},${(y + px * Math.sin(a) + py * Math.cos(a)).toFixed(1)}`);
  }
  return svg`<polygon points=${pts.join(" ")}/>`;
}

@customElement("map-canvas")
export class MapCanvas extends LitElement {
  static styles = css`
    :host { display: block; background: #fff; overflow: hidden; }
    svg { display: block; }
    .plot { fill: #18c66c; stroke: #08140d; stroke-width: 3.4; stroke-linejoin: round; shape-rendering: crispEdges; }
    .road { fill: none; stroke: #ee2a35; stroke-width: 3; }
  `;
  render() {
    return html`<svg width="981" height="574" viewBox="322 164 981 574">
      <g class="plot">
        <g transform="translate(695 215) scale(.33333)">${north.map(outline)}
          <polygon points="316,60 330,64 334,54 345,48 346,60 350,66 360,78 362,90 350,98 338,94 330,98 328,84 322,70"/>
          <polygon points="422,68 436,72 444,66 455,66 450,78 444,92 436,86 426,80"/>
        </g>
        <g transform="translate(790 330) scale(.33333)">${south.map(outline)}</g>
      </g>
      ${roads.map((f) => svg`<g class="road" transform="translate(${f.dx} ${f.dy}) scale(.33333)">${f.lines.map((l) => svg`<polyline points=${l}/>`)}</g>`)}
      <path d="M831 379h3v6h-3z" fill="none" stroke="#b0101c" stroke-width="1"/>
    </svg>`;
  }
}

const menus = ["Project", "Edit", "Tampilan", "Layer", "Pengaturan", "Plugins", "Vektor", "Raster", "Basisdata", "Web", "MMQGIS", "Processing", "Bantuan"];
const bar1a = ["fresh", "open", "save", "saveas", "print", "composer"];
const bar1b = ["pencils", "pencil", "savee", "addf", "movef", "node", "trash", "cut", "copy"];
const bar1c = ["touch", "hand", "pansel", "zin", "zout", "z11", "zfull", "zsel", "zlay", "zlast", "znext", "refresh"];
const bar2a = ["lab", "labpin", "labg", "labeye", "labmov", "labrot", "labed"];
const bar2b = ["info", "gear", "v-off", "select", "v", "desel", "eps", "table", "abacus", "ruler", "v", "tip", "annot", "form", "textann", "v"];
const bar2c = ["flame", "flamecut", "flamewand", "flamedb", "flamegreen", "flameblue"];
const bar3 = ["h1", "h2", "h3", "h4", "sunup", "sundown", "conup", "condown", "georef", "heat", "interp", "zonal"];
const side = ["vector", "raster", "postgis", "spatialite", "mssql", "oracle", "oraster", "wms", "wcs", "wfs", "csv", "newvec", "gps"];
const layers = [
  { name: "lokasi penting", on: false, kind: "dot", color: "#f3d768", active: false },
  { name: "Jalan", on: true, kind: "line", color: "#c44a6c", active: true },
  { name: "kebun_tegalan", on: true, kind: "fill", color: "#18c76c", active: false },
  { name: "KRB III", on: false, kind: "fill", color: "#b29e9d", active: false },
];

@customElement("app-root")
export class AppRoot extends LitElement {
  static styles = css`
    :host { display: flex; flex-direction: column; width: 1303px; height: 765px; overflow: hidden; background: #efefef; color: #000;
      font: 11px "DejaVu Sans Condensed", "DejaVu Sans", sans-serif; font-stretch: condensed; letter-spacing: -0.2px; box-sizing: border-box; white-space: nowrap; }
    * { box-sizing: border-box; }
    .title { height: 22px; flex: none; display: flex; justify-content: space-between; border-bottom: 1px solid #26406c; box-shadow: inset 0 -1px #a9c4ea;
      background: radial-gradient(ellipse 105px 26px at 62px 11px, #b0caec 35%, #a6c2e800 100%), radial-gradient(ellipse 75px 12px at 1222px 22px, #93748f, #93748f00), linear-gradient(100deg, #7fa8df 0, #5b8ed4 120px, #2663bb 160px, #2463bd 330px, #4681d6 345px, #2f6cc6 420px, #2f6ec9 560px, #3975cd 655px, #5b90dd 665px, #4a81d2 800px, #5a90dc 870px, #628fdb 1010px, #5488d6 1100px, #6a9ae2 1303px); }
    .name { display: flex; gap: 5px; padding: 2px 0 0 1px; font-size: 12px; letter-spacing: -.1px; line-height: 19px; }
    .wb { display: flex; width: 104px; height: 18px; margin-right: 1px; border: 1px solid #c3d7f3; border-top: 0; border-radius: 0 0 5px 5px; box-shadow: inset 0 0 0 1px #3c5a8d55; }
    .wb svg { display: block; }
    .wb span { border-right: 1px solid #a9c1e6; width: 28px; padding-left: 7px; }
    .wb span + span { width: 27px; padding-left: 6px; }
    .wb span + span + span { border: 0; width: 45px; padding-left: 17px; }
    .menu { height: 23px; flex: none; padding-left: 9px; display: grid; grid-template-columns: 49px 33px 56px 42px 71px 49px 44px 47px 61px 37px 56px 66px 60px; line-height: 25px; border-bottom: 1px solid #b8b8b8; box-shadow: 0 1px #fafafa; }
    .menu span:nth-child(4n + 1), .menu span:nth-child(3) { letter-spacing: -.1px; }
    .bar { height: 39px; flex: none; display: flex; align-items: stretch; border-bottom: 1px solid #b8b8b8; box-shadow: inset 0 1px #fafafa; }
    .grip { flex: none; width: 14px; display: flex; justify-content: flex-end; align-items: center; padding-right: 1px; padding-left: 4px; }
    .first { width: 12px; }
    .short { width: 8px; padding-left: 0; }
    .grip i { width: 5px; height: 30px; }
    .dots { background: radial-gradient(circle at 1px 1px, #c6c6c6 1px, transparent 1.300px) 0 0 / 5px 5px, radial-gradient(circle at 1px 1px, #c6c6c6 1px, transparent 1.300px) 3px 2px / 5px 5px; }
    .b { width: 35px; flex: none; display: flex; align-items: center; padding-left: 5px; }
    .b svg, .vb svg { flex: none; overflow: visible; display: block; }
    .pressed { width: 34px; margin: 3px 1px 2px 0; padding-left: 4px; border: 1px solid #8e8e8e; border-radius: 3px; background: #d4d4d4; }
    .drop { width: 12px; flex: none; display: flex; align-items: center; justify-content: flex-start; }
    .drop i, .tri { border: 4.500px solid transparent; border-top: 5px solid #000; border-bottom: 0; width: 0; height: 0; }
    .drop.off i { border-top-color: #a4a4a4; }
    .more { width: 25px; padding: 9px 0 0 8px; font: bold 15px "DejaVu Sans"; flex: none; }
    .main { flex: 1; min-height: 0; display: flex; }
    .side { width: 51px; flex: none; border-right: 1px solid #b8b8b8; padding: 6px 0 0 6px; }
    .hgrip { height: 5px; }
    .side .hgrip { width: 41px; }
    .vb { height: 34px; display: flex; align-items: center; padding-left: 8px; }
    .vb.w { padding-left: 2px; }
    .vb.w .drop { margin-left: 6px; }
    .dock { width: 264px; flex: none; border-left: 1px solid #c4c4c4; display: flex; flex-direction: column; }
    .dh { height: 18px; display: flex; align-items: center; padding-left: 4px; flex: none; }
    .dh .hgrip { width: 73px; }
    .dh b { font-weight: normal; font-size: 10px; letter-spacing: -.4px; width: 80px; text-align: center; padding-top: 1px; }
    .dh .k { width: 14px; height: 14px; border: 1px solid #777; border-radius: 2px; margin-left: 1px; background: #f6f6f6; display: block; }
    .dh .k.one { margin-left: 5px; }
    .dt { height: 33px; display: flex; align-items: center; padding: 0 0 3px 6px; gap: 8px; flex: none; }
    .tree { flex: 1; background: #fff; border: 1px solid #b4b4b4; border-radius: 2px; padding-top: 2px; margin-left: 1px; }
    .row { height: 16px; line-height: 15px; display: flex; align-items: center; font-weight: bold; letter-spacing: .1px; }
    .row.active { background: #efefef; }
    .row.active .nm { text-decoration: underline; }
    .nm { height: 16px; }
    .nm.wide { letter-spacing: .33px; }
    .br { width: 22px; margin-left: 1px; height: 16px; flex: none; }
    .ck { width: 13px; height: 13px; border: 1px solid #c4c4c4; border-radius: 2px; background: #fcfcfc; flex: none; }
    .ck svg { display: block; }
    .sym { width: 16px; height: 16px; margin: 0 6px; flex: none; display: block; }
    .split { width: 6px; flex: none; display: flex; align-items: center; padding-left: 1px; }
    .split i { height: 190px; width: 4px; background: radial-gradient(circle at 1px 1px, #bdbdbd 1px, transparent 1.300px) 0 0 / 4px 5px; }
    map-canvas { flex: 1; border: 2px solid #b9b9b9; border-width: 2px 0 1px 1px; }
    .status { height: 28px; flex: none; display: flex; align-items: center; padding: 3px 0 0 279px; font-size: 11px; }
    .status a { color: #00f; text-decoration: underline; width: 124px; margin-right: 9px; padding-top: 2px; letter-spacing: -.18px; }
    .mb { width: 20px; height: 20px; border: 1px solid #8a8a8a; border-radius: 3px; background: #e4e4e4; margin-right: 8px; flex: none; }
    .fld { background: #fff; border: 1px solid #b0b0b0; border-radius: 3px; height: 20px; line-height: 20px; flex: none; }
    .co { width: 60px; } .xy { width: 277px; text-align: center; padding-right: 1px; margin-right: 8px; }
    .sk { width: 35px; }
    .sc { width: 88px; padding-left: 5px; display: flex; justify-content: space-between; margin-right: 9px; }
    .sc .dd { width: 16px; border-left: 1px solid #b8b8b8; background: #efefef; display: flex; align-items: center; justify-content: center; }
    .ro { width: 55px; }
    .sp { width: 98px; height: 25px; line-height: 25px; margin-bottom: -3px; padding-left: 4px; display: flex; justify-content: space-between; margin-right: 7px; }
    .sp .dd { width: 15px; border-left: 1px solid #b8b8b8; background: linear-gradient(#efefef 12px, #b8b8b8 12px 13px, #efefef 13px); display: flex; flex-direction: column; align-items: center; justify-content: space-between; padding: 4px 0 3px; }
    .tri { border-width: 4px; border-top-width: 4px; }
    .tri.u { transform: rotate(180deg); }
    .re { width: 57px; padding-left: 3px; }
    .ep { width: 109px; padding-left: 2px; letter-spacing: -.1px; }
    .status svg { display: block; flex: none; }
  `;
  private buttons(list: string[]) {
    return list.map((n) => n === "v" || n === "v-off"
      ? html`<span class="drop ${n === "v-off" ? "off" : ""}"><i></i></span>`
      : html`<span class="b ${n === "hand" ? "pressed" : ""}">${icon(n)}</span>`);
  }
  private grip(kind = "") { return html`<span class="grip ${kind}"><i class="dots"></i></span>`; }
  private cross() { return svg`<path d="M3 3l5 5M8 3l-5 5" stroke="#000" stroke-width="2.600" stroke-linecap="round"/>`; }
  render() {
    return html`
      <div class="title">
        <div class="name"><svg width="15" height="18" viewBox="0 0 15 18"><path d="M2 15Q0 7 5 3l6-2q3 2 1 7l-3 7q-3 2-7 0z" fill="#b8d430" stroke="#55751f" stroke-width=".8"/><path d="M8 3q5 4 2 9l-3 4" fill="#f2ee70" stroke="#55751f" stroke-width=".8"/><path d="M1 14h5M3.500 11.500v5M8 5l-3 6 5 4 3-1" stroke="#1f3a16" stroke-width="1.300" fill="none"/></svg><span>QGIS 2.8.1-Wien</span></div>
        <div class="wb">
          <span><svg width="16" height="16"><rect x="1.500" y="8.500" width="11" height="4" rx="1" fill="#fff" stroke="#46597f"/></svg></span>
          <span><svg width="16" height="16"><path d="M4.500 2.500h8v8h-8z" fill="#fff" stroke="#46597f"/><path d="M2.500 4.500h8v8h-8z" fill="#fff" stroke="#46597f"/><path d="M5.500 7.500h2v2h-2z" fill="#7ba0dc" stroke="#46597f"/></svg></span>
          <span><svg width="16" height="16"><path d="M2.500 4l8 8M10.500 4l-8 8" stroke="#46597f" stroke-width="4.800"/><path d="M3 4.500l7 7M10 4.500l-7 7" stroke="#fff" stroke-width="2.800"/></svg></span>
        </div>
      </div>
      <div class="menu">${menus.map((m) => html`<span>${m}</span>`)}</div>
      <div class="bar">${this.grip("first")}${this.buttons(bar1a)}${this.grip()}${this.buttons(bar1b)}<span class="more">»</span>${this.grip("short")}${this.buttons(bar1c)}</div>
      <div class="bar">${this.grip("first")}${this.buttons(bar2a)}${this.grip()}${this.buttons(bar2b)}${this.grip()}${this.buttons(bar2c)}</div>
      <div class="bar">${this.grip("first")}${this.buttons(bar3)}</div>
      <div class="main">
        <div class="side"><div class="hgrip dots"></div>
          ${side.map((n) => html`<div class="vb ${n === "newvec" ? "w" : ""}">${icon(n)}${n === "newvec" ? html`<span class="drop"><i></i></span>` : ""}</div>`)}
        </div>
        <div class="dock">
          <div class="dh"><div class="hgrip dots"></div><b>Daftar Lapisan</b><div class="hgrip dots"></div>
            <svg class="k one" viewBox="0 0 12 12"><path d="M4.500 2.500h5v5h-5zM4 3h6" fill="none" stroke="#000" stroke-width="1.300"/><path d="M2.500 5.500h5v4h-5z" fill="#fff" stroke="#000" stroke-width="1.300"/></svg>
            <svg class="k" viewBox="0 0 12 12"><path d="M2.500 2.500l7 7M9.500 2.500l-7 7" stroke="#000" stroke-width="1.700"/></svg></div>
          <div class="dt">${["dup", "eye", "filter", "expand", "collapse", "remove"].map(icon)}</div>
          <div class="tree">
            ${layers.map((l, i) => html`<div class="row ${l.active ? "active" : ""}">
              <svg class="br"><path d="M9.500 0V${i === 3 ? 8 : 16}M10 8.500H20" stroke="#999" stroke-dasharray="1 1"/></svg>
              <span class="ck"><svg width="11" height="11">${l.on ? this.cross() : ""}</svg></span>
              <svg class="sym">${l.kind === "dot" ? svg`<circle cx="8" cy="7" r="4" fill=${l.color} stroke="#333" stroke-width="1.200"/>` : l.kind === "line" ? svg`<path d="M0 7.500h16" stroke=${l.color}/>` : svg`<rect x=".5" y=".5" width="15" height="15" fill=${l.color} stroke="#3a4a3e"/>`}</svg>
              <span class="nm ${l.kind === "fill" || l.active ? "wide" : ""}">${l.name}</span></div>`)}
          </div>
        </div>
        <div class="split"><i></i></div>
        <map-canvas></map-canvas>
      </div>
      <div class="status">
        <a>Perbaruan plugin tersedia</a>
        <span class="mb"><svg width="18" height="18"><path d="M3 3l3-1 3 3 1 4 4 1 1 4-3 2-4-1-1-4-4-3z" fill="#eee" stroke="#222" stroke-width="1.300"/><path d="M4 6l4-3M5 8.500l5-3.500M8 11l4-3M10 12h3v3M12 5l4-2M9 3l2 3" stroke="#222" stroke-width="1.300" fill="none"/></svg></span>
        <span class="co">Koordinat:</span><span class="fld xy">110.1398,-7.6785</span>
        <span class="sk">Skala</span><span class="fld sc">1:224,662<span class="dd"><i class="tri"></i></span></span>
        <span class="ro">Rotation:</span><span class="fld sp">0.0<span class="dd"><i class="tri u"></i><i class="tri"></i></span></span>
        <span class="ck"><svg width="11" height="11">${this.cross()}</svg></span><span class="re">Render</span>
        <svg width="16" height="16"><circle cx="8" cy="8" r="6.500" fill="#bbb" stroke="#333" stroke-width="1.500"/><path d="M8 0v16M0 8h16" stroke="#333" stroke-width="1.300"/><path d="M8 3.500l4.500 4.500L8 12.500 3.500 8z" fill="#eee" stroke="#444" stroke-width="1.300"/></svg><span class="ep">EPSG:4326 (OTF)</span>
        <svg width="18" height="16"><ellipse cx="9" cy="7" rx="8" ry="6" fill="#646464"/><path d="M10 11l5 4-1-6z" fill="#646464"/></svg>
      </div>`;
  }
}
